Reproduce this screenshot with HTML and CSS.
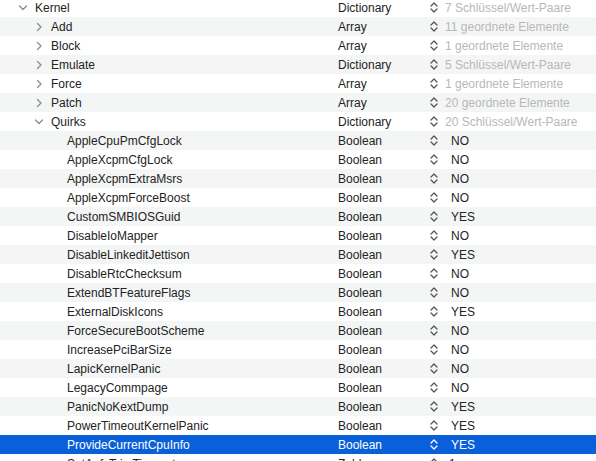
FILE: index.html
```html
<!DOCTYPE html>
<html>
<head>
<meta charset="utf-8">
<link rel="stylesheet" href="styles.css">
</head>
<body>
<div class="outline">
  <div class="row">
    <div class="key l0"><span class="disc"><svg width="14" height="10" viewBox="0 0 14 10"><path d="M3.5 3 L7 6.5 L10.5 3" class="chev"/></svg></span>Kernel</div>
    <div class="type">Dictionary</div><div class="step"><svg width="8" height="11" viewBox="0 0 8 11"><path d="M1 4 L4 1 L7 4 M1 7 L4 10 L7 7" class="st"/></svg></div><div class="val dim">7 Schlüssel/Wert-Paare</div>
  </div>
  <div class="row alt">
    <div class="key l1"><span class="disc"><svg width="14" height="10" viewBox="0 0 14 10"><path d="M5.5 1.5 L9 5 L5.5 8.5" class="chev"/></svg></span>Add</div>
    <div class="type">Array</div><div class="step"><svg width="8" height="11" viewBox="0 0 8 11"><path d="M1 4 L4 1 L7 4 M1 7 L4 10 L7 7" class="st"/></svg></div><div class="val dim">11 geordnete Elemente</div>
  </div>
  <div class="row">
    <div class="key l1"><span class="disc"><svg width="14" height="10" viewBox="0 0 14 10"><path d="M5.5 1.5 L9 5 L5.5 8.5" class="chev"/></svg></span>Block</div>
    <div class="type">Array</div><div class="step"><svg width="8" height="11" viewBox="0 0 8 11"><path d="M1 4 L4 1 L7 4 M1 7 L4 10 L7 7" class="st"/></svg></div><div class="val dim">1 geordnete Elemente</div>
  </div>
  <div class="row alt">
    <div class="key l1"><span class="disc"><svg width="14" height="10" viewBox="0 0 14 10"><path d="M5.5 1.5 L9 5 L5.5 8.5" class="chev"/></svg></span>Emulate</div>
    <div class="type">Dictionary</div><div class="step"><svg width="8" height="11" viewBox="0 0 8 11"><path d="M1 4 L4 1 L7 4 M1 7 L4 10 L7 7" class="st"/></svg></div><div class="val dim">5 Schlüssel/Wert-Paare</div>
  </div>
  <div class="row">
    <div class="key l1"><span class="disc"><svg width="14" height="10" viewBox="0 0 14 10"><path d="M5.5 1.5 L9 5 L5.5 8.5" class="chev"/></svg></span>Force</div>
    <div class="type">Array</div><div class="step"><svg width="8" height="11" viewBox="0 0 8 11"><path d="M1 4 L4 1 L7 4 M1 7 L4 10 L7 7" class="st"/></svg></div><div class="val dim">1 geordnete Elemente</div>
  </div>
  <div class="row alt">
    <div class="key l1"><span class="disc"><svg width="14" height="10" viewBox="0 0 14 10"><path d="M5.5 1.5 L9 5 L5.5 8.5" class="chev"/></svg></span>Patch</div>
    <div class="type">Array</div><div class="step"><svg width="8" height="11" viewBox="0 0 8 11"><path d="M1 4 L4 1 L7 4 M1 7 L4 10 L7 7" class="st"/></svg></div><div class="val dim">20 geordnete Elemente</div>
  </div>
  <div class="row">
    <div class="key l1"><span class="disc"><svg width="14" height="10" viewBox="0 0 14 10"><path d="M3.5 3 L7 6.5 L10.5 3" class="chev"/></svg></span>Quirks</div>
    <div class="type">Dictionary</div><div class="step"><svg width="8" height="11" viewBox="0 0 8 11"><path d="M1 4 L4 1 L7 4 M1 7 L4 10 L7 7" class="st"/></svg></div><div class="val dim">20 Schlüssel/Wert-Paare</div>
  </div>
  <div class="row alt"><div class="key l2"><span class="disc"></span>AppleCpuPmCfgLock</div><div class="type">Boolean</div><div class="step"><svg width="8" height="11" viewBox="0 0 8 11"><path d="M1 4 L4 1 L7 4 M1 7 L4 10 L7 7" class="st"/></svg></div><div class="val bool">NO</div></div>
  <div class="row"><div class="key l2"><span class="disc"></span>AppleXcpmCfgLock</div><div class="type">Boolean</div><div class="step"><svg width="8" height="11" viewBox="0 0 8 11"><path d="M1 4 L4 1 L7 4 M1 7 L4 10 L7 7" class="st"/></svg></div><div class="val bool">NO</div></div>
  <div class="row alt"><div class="key l2"><span class="disc"></span>AppleXcpmExtraMsrs</div><div class="type">Boolean</div><div class="step"><svg width="8" height="11" viewBox="0 0 8 11"><path d="M1 4 L4 1 L7 4 M1 7 L4 10 L7 7" class="st"/></svg></div><div class="val bool">NO</div></div>
  <div class="row"><div class="key l2"><span class="disc"></span>AppleXcpmForceBoost</div><div class="type">Boolean</div><div class="step"><svg width="8" height="11" viewBox="0 0 8 11"><path d="M1 4 L4 1 L7 4 M1 7 L4 10 L7 7" class="st"/></svg></div><div class="val bool">NO</div></div>
  <div class="row alt"><div class="key l2"><span class="disc"></span>CustomSMBIOSGuid</div><div class="type">Boolean</div><div class="step"><svg width="8" height="11" viewBox="0 0 8 11"><path d="M1 4 L4 1 L7 4 M1 7 L4 10 L7 7" class="st"/></svg></div><div class="val bool">YES</div></div>
  <div class="row"><div class="key l2"><span class="disc"></span>DisableIoMapper</div><div class="type">Boolean</div><div class="step"><svg width="8" height="11" viewBox="0 0 8 11"><path d="M1 4 L4 1 L7 4 M1 7 L4 10 L7 7" class="st"/></svg></div><div class="val bool">NO</div></div>
  <div class="row alt"><div class="key l2"><span class="disc"></span>DisableLinkeditJettison</div><div class="type">Boolean</div><div class="step"><svg width="8" height="11" viewBox="0 0 8 11"><path d="M1 4 L4 1 L7 4 M1 7 L4 10 L7 7" class="st"/></svg></div><div class="val bool">YES</div></div>
  <div class="row"><div class="key l2"><span class="disc"></span>DisableRtcChecksum</div><div class="type">Boolean</div><div class="step"><svg width="8" height="11" viewBox="0 0 8 11"><path d="M1 4 L4 1 L7 4 M1 7 L4 10 L7 7" class="st"/></svg></div><div class="val bool">NO</div></div>
  <div class="row alt"><div class="key l2"><span class="disc"></span>ExtendBTFeatureFlags</div><div class="type">Boolean</div><div class="step"><svg width="8" height="11" viewBox="0 0 8 11"><path d="M1 4 L4 1 L7 4 M1 7 L4 10 L7 7" class="st"/></svg></div><div class="val bool">NO</div></div>
  <div class="row"><div class="key l2"><span class="disc"></span>ExternalDiskIcons</div><div class="type">Boolean</div><div class="step"><svg width="8" height="11" viewBox="0 0 8 11"><path d="M1 4 L4 1 L7 4 M1 7 L4 10 L7 7" class="st"/></svg></div><div class="val bool">YES</div></div>
  <div class="row alt"><div class="key l2"><span class="disc"></span>ForceSecureBootScheme</div><div class="type">Boolean</div><div class="step"><svg width="8" height="11" viewBox="0 0 8 11"><path d="M1 4 L4 1 L7 4 M1 7 L4 10 L7 7" class="st"/></svg></div><div class="val bool">NO</div></div>
  <div class="row"><div class="key l2"><span class="disc"></span>IncreasePciBarSize</div><div class="type">Boolean</div><div class="step"><svg width="8" height="11" viewBox="0 0 8 11"><path d="M1 4 L4 1 L7 4 M1 7 L4 10 L7 7" class="st"/></svg></div><div class="val bool">NO</div></div>
  <div class="row alt"><div class="key l2"><span class="disc"></span>LapicKernelPanic</div><div class="type">Boolean</div><div class="step"><svg width="8" height="11" viewBox="0 0 8 11"><path d="M1 4 L4 1 L7 4 M1 7 L4 10 L7 7" class="st"/></svg></div><div class="val bool">NO</div></div>
  <div class="row"><div class="key l2"><span class="disc"></span>LegacyCommpage</div><div class="type">Boolean</div><div class="step"><svg width="8" height="11" viewBox="0 0 8 11"><path d="M1 4 L4 1 L7 4 M1 7 L4 10 L7 7" class="st"/></svg></div><div class="val bool">NO</div></div>
  <div class="row alt"><div class="key l2"><span class="disc"></span>PanicNoKextDump</div><div class="type">Boolean</div><div class="step"><svg width="8" height="11" viewBox="0 0 8 11"><path d="M1 4 L4 1 L7 4 M1 7 L4 10 L7 7" class="st"/></svg></div><div class="val bool">YES</div></div>
  <div class="row"><div class="key l2"><span class="disc"></span>PowerTimeoutKernelPanic</div><div class="type">Boolean</div><div class="step"><svg width="8" height="11" viewBox="0 0 8 11"><path d="M1 4 L4 1 L7 4 M1 7 L4 10 L7 7" class="st"/></svg></div><div class="val bool">YES</div></div>
  <div class="row sel"><div class="key l2"><span class="disc"></span>ProvideCurrentCpuInfo</div><div class="type">Boolean</div><div class="step"><svg width="8" height="11" viewBox="0 0 8 11"><path d="M1 4 L4 1 L7 4 M1 7 L4 10 L7 7" class="st"/></svg></div><div class="val bool">YES</div></div>
  <div class="row"><div class="key l2"><span class="disc"></span>SetApfsTrimTimeout</div><div class="type">Zahl</div><div class="step"><svg width="8" height="11" viewBox="0 0 8 11"><path d="M1 4 L4 1 L7 4 M1 7 L4 10 L7 7" class="st"/></svg></div><div class="val">-1</div></div>
</div>
</body>
</html>
```

FILE: styles.css
```css
html, body {
  margin: 0;
  padding: 0;
  background: #ffffff;
  overflow: hidden;
}
body {
  font-family: "Liberation Sans", Arial, sans-serif;
  font-size: 12px;
  color: #232323;
}
.outline {
  margin-top: -2px;
}
.row {
  display: grid;
  grid-template-columns: 338px 91px 15px 1fr;
  height: 19px;
  align-items: center;
  white-space: nowrap;
}
.row.alt {
  background: #f4f5f5;
}
.row.sel {
  background: #0a60d8;
  color: #ffffff;
}
.key {
  display: flex;
  align-items: center;
}
.key.l0 { padding-left: 16px; }
.key.l1 { padding-left: 32px; }
.key.l2 { padding-left: 48px; }
.disc {
  width: 19px;
  height: 10px;
  display: inline-flex;
  align-items: center;
  flex: none;
}
.chev {
  fill: none;
  stroke: #8c8c8c;
  stroke-width: 1.3;
  stroke-linecap: round;
  stroke-linejoin: round;
}
.step {
  display: flex;
  align-items: center;
  padding-left: 1px;
}
.st {
  fill: none;
  stroke: #555555;
  stroke-width: 1.3;
  stroke-linecap: round;
  stroke-linejoin: round;
}
.sel .st {
  stroke: #ffffff;
}
.val.dim {
  color: #b8b8b8;
}
.val.bool {
  padding-left: 7px;
}
.val {
  padding-left: 1px;
}
```
